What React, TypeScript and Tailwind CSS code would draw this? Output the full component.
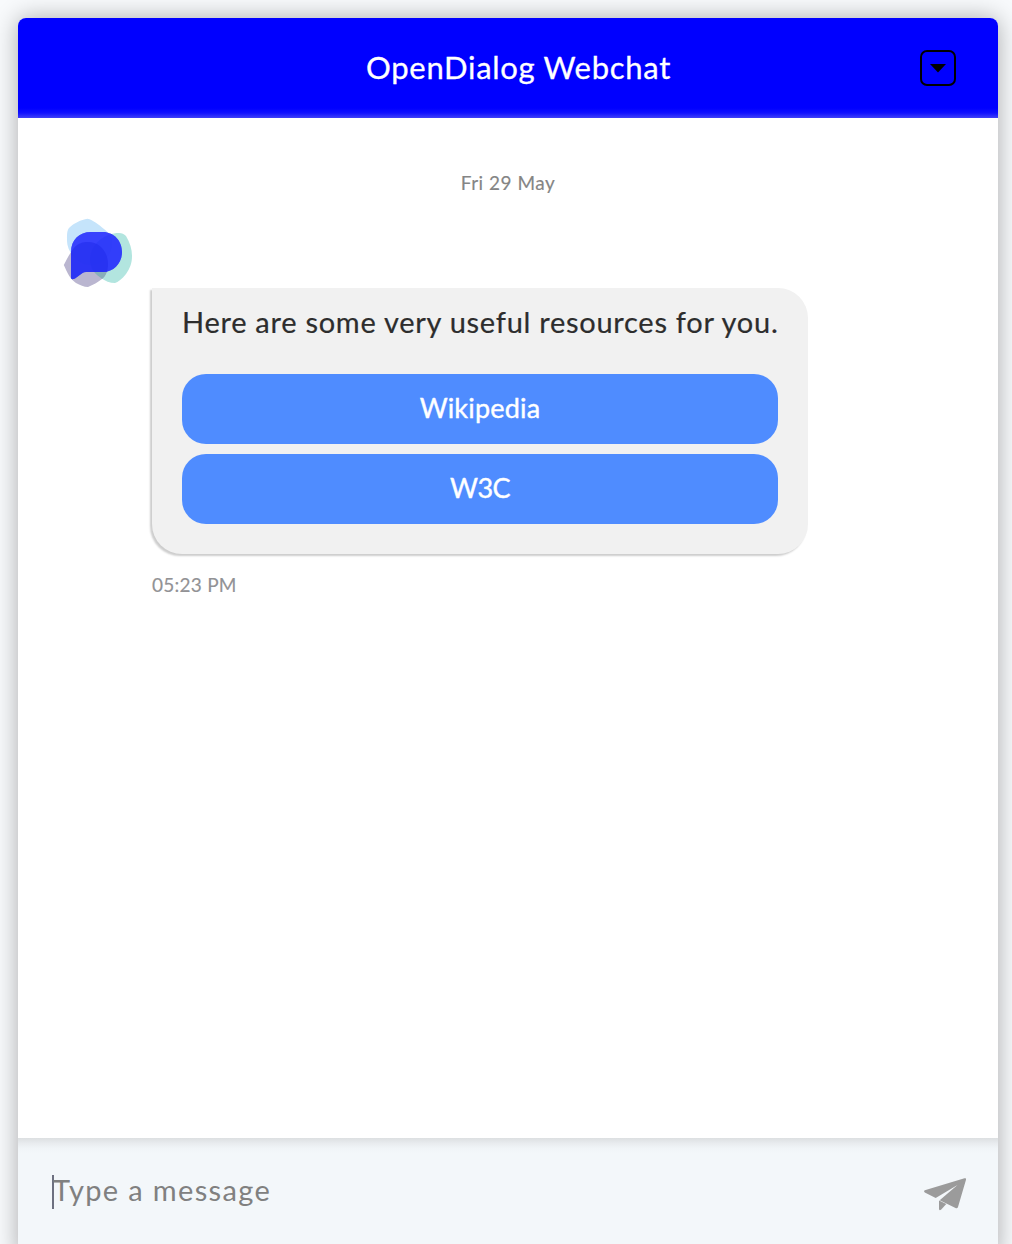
import React from "react";

function Avatar() {
  const blue = "M24.5 .8C30 2 36 7 41 11C46 15 49 19 49 25C49 36 40 47 28 47C15 47 4 34 4 23C4 15 4 13 6 10C11 5 18 2 24.500 .8Z";
  const teal = "M56 15C59 15 61 16 63 18C67 25 69 31 69 38C69 45 67 50 63 56C59 61 55 64 52 65C47 65 42 63 38 60C31 56 27 49 27 42C27 27 41 15 56 15Z";
  const violet = "M.8 47C5 39 7 35 11 30C15 25 20 24 25 24C37 24 45 34 45 46C45 53 43 58 39 61C35 64 30 67 25 69C21 69 17 67 13 65C7 61 4 54 .8 47Z";
  const bubble = "M8 60V34C8 22 16 14 28 14H40C51 14 59 23 59 34C59 45 51 54 40 54H23Q21 54 19.500 55L12 60.500Q8 62 8 60Z";
  return (
    <svg className="-ml-px block h-[70px] w-[70px]" viewBox="-1 0 70 70">
      <defs><clipPath id="bubble"><path d={bubble} /></clipPath></defs>
      <path d={blue} fill="#c5e4fb" />
      <path d={teal} fill="#b2e5df" />
      <path d={violet} fill="#bab6d0" />
      <path d="M38 60C33 57 30 53 28.500 49L45 45C45 52 43 58 39 61Z" fill="#88afb9" />
      <path d={bubble} fill="#3c44fe" />
      <g clipPath="url(#bubble)">
        <path d={blue} fill="#343ffb" opacity=".5" />
        <path d={teal} fill="#2b3af6" opacity=".6" />
        <path d={violet} fill="#232eee" opacity=".65" />
      </g>
    </svg>
  );
}

function Header() {
  return (
    <header className="flex h-[100px] items-center justify-between rounded-t-[8px] bg-[linear-gradient(to_bottom,#0000ff_0,#0000ff_90px,#1010ff_95px,#4040f8_100px)] px-[42px]">
      <span className="w-9" />
      <h1 className="-mt-[2px] ml-[21px] whitespace-nowrap text-[31px] leading-none tracking-[0.7px] text-white [-webkit-text-stroke:0.3px_white]">OpenDialog Webchat</h1>
      <button aria-label="Minimise" className="flex h-9 w-9 items-center justify-center rounded-[7px] border-2 border-black">
        <svg className="h-[10px] w-4" viewBox="0 0 16 10"><path d="M0 1H16L8 9.500Z" fill="#000" /></svg>
      </button>
    </header>
  );
}

export default function App() {
  return (
    <div className="h-[1244px] overflow-hidden bg-[#f8fafc] pl-[18px] pr-[14px] pt-[18px] font-['Lato',sans-serif]">
      <main className="flex h-[1240px] flex-col rounded-t-[8px] bg-white shadow-[0_0_24px_rgba(0,0,0,0.32)]">
        <Header />
        <section className="flex h-[1020px] flex-col bg-white">
          <p className="mt-[53px] text-center text-[19px] leading-6 tracking-[0.5px] text-[#858585] [-webkit-text-stroke:0.15px_#858585]">Fri 29 May</p>
          <div className="ml-[45px] mt-[23px]"><Avatar /></div>
          <div className="ml-[134px] flex h-[266px] w-[656px] flex-col rounded-[30px] rounded-tl-none bg-[#f1f1f1] px-[30px] pt-[17px] shadow-[-2px_2px_2px_rgba(0,0,0,0.2)]">
            <p className="whitespace-nowrap text-[29px] leading-[34px] tracking-[0.73px] text-[#2d2d2d] [-webkit-text-stroke:0.2px_#2d2d2d]">Here are some very useful resources for you.</p>
            <div className="mt-[35px] flex flex-col gap-[10px]">
              <button className="h-[70px] rounded-[24px] bg-[#4f8cff] pb-px text-[27px] tracking-[0.2px] text-white [-webkit-text-stroke:0.4px_white]">Wikipedia</button>
              <button className="h-[70px] rounded-[24px] bg-[#4f8cff] pb-px text-[27px] tracking-[-0.5px] text-white [-webkit-text-stroke:0.4px_white]">W3C</button>
            </div>
          </div>
          <time className="ml-[134px] mt-[19px] text-[19px] leading-6 tracking-[0.25px] text-[#929295] [-webkit-text-stroke:0.15px_#929295]">05:23 PM</time>
        </section>
        <footer className="flex h-[120px] items-start justify-between bg-[#f3f7fa] bg-[linear-gradient(to_bottom,#dcdfe1_0,#e8ebee_5px,#f0f4f7_10px,#f3f7fa_15px)] pl-[34px] pr-8 pt-[37px]">
          <div className="flex h-[34px] items-center">
            <span className="h-[34px] w-[2px] bg-[#6d7080]" />
            <span className="-ml-px -mt-[5px] text-[29px] leading-8 tracking-[1.35px] text-[#808080]">Type a message</span>
          </div>
          <svg className="mt-[2px] h-[34px] w-[42px]" viewBox="0 0 42 34" fill="#9b9b9b">
            <path d="M.8 13.200L40.500 1.200Q42.500 .8 42 2.800L34 30Q33.300 32 31.500 31L15.700 23.300L33.500 8L11.700 21L.8 15.500Q-.7 14.200 .8 13.200Z" />
            <path d="M15 23.500L22.300 26.900L17 32.700Q15 34 15 31.500Z" />
          </svg>
        </footer>
      </main>
    </div>
  );
}
